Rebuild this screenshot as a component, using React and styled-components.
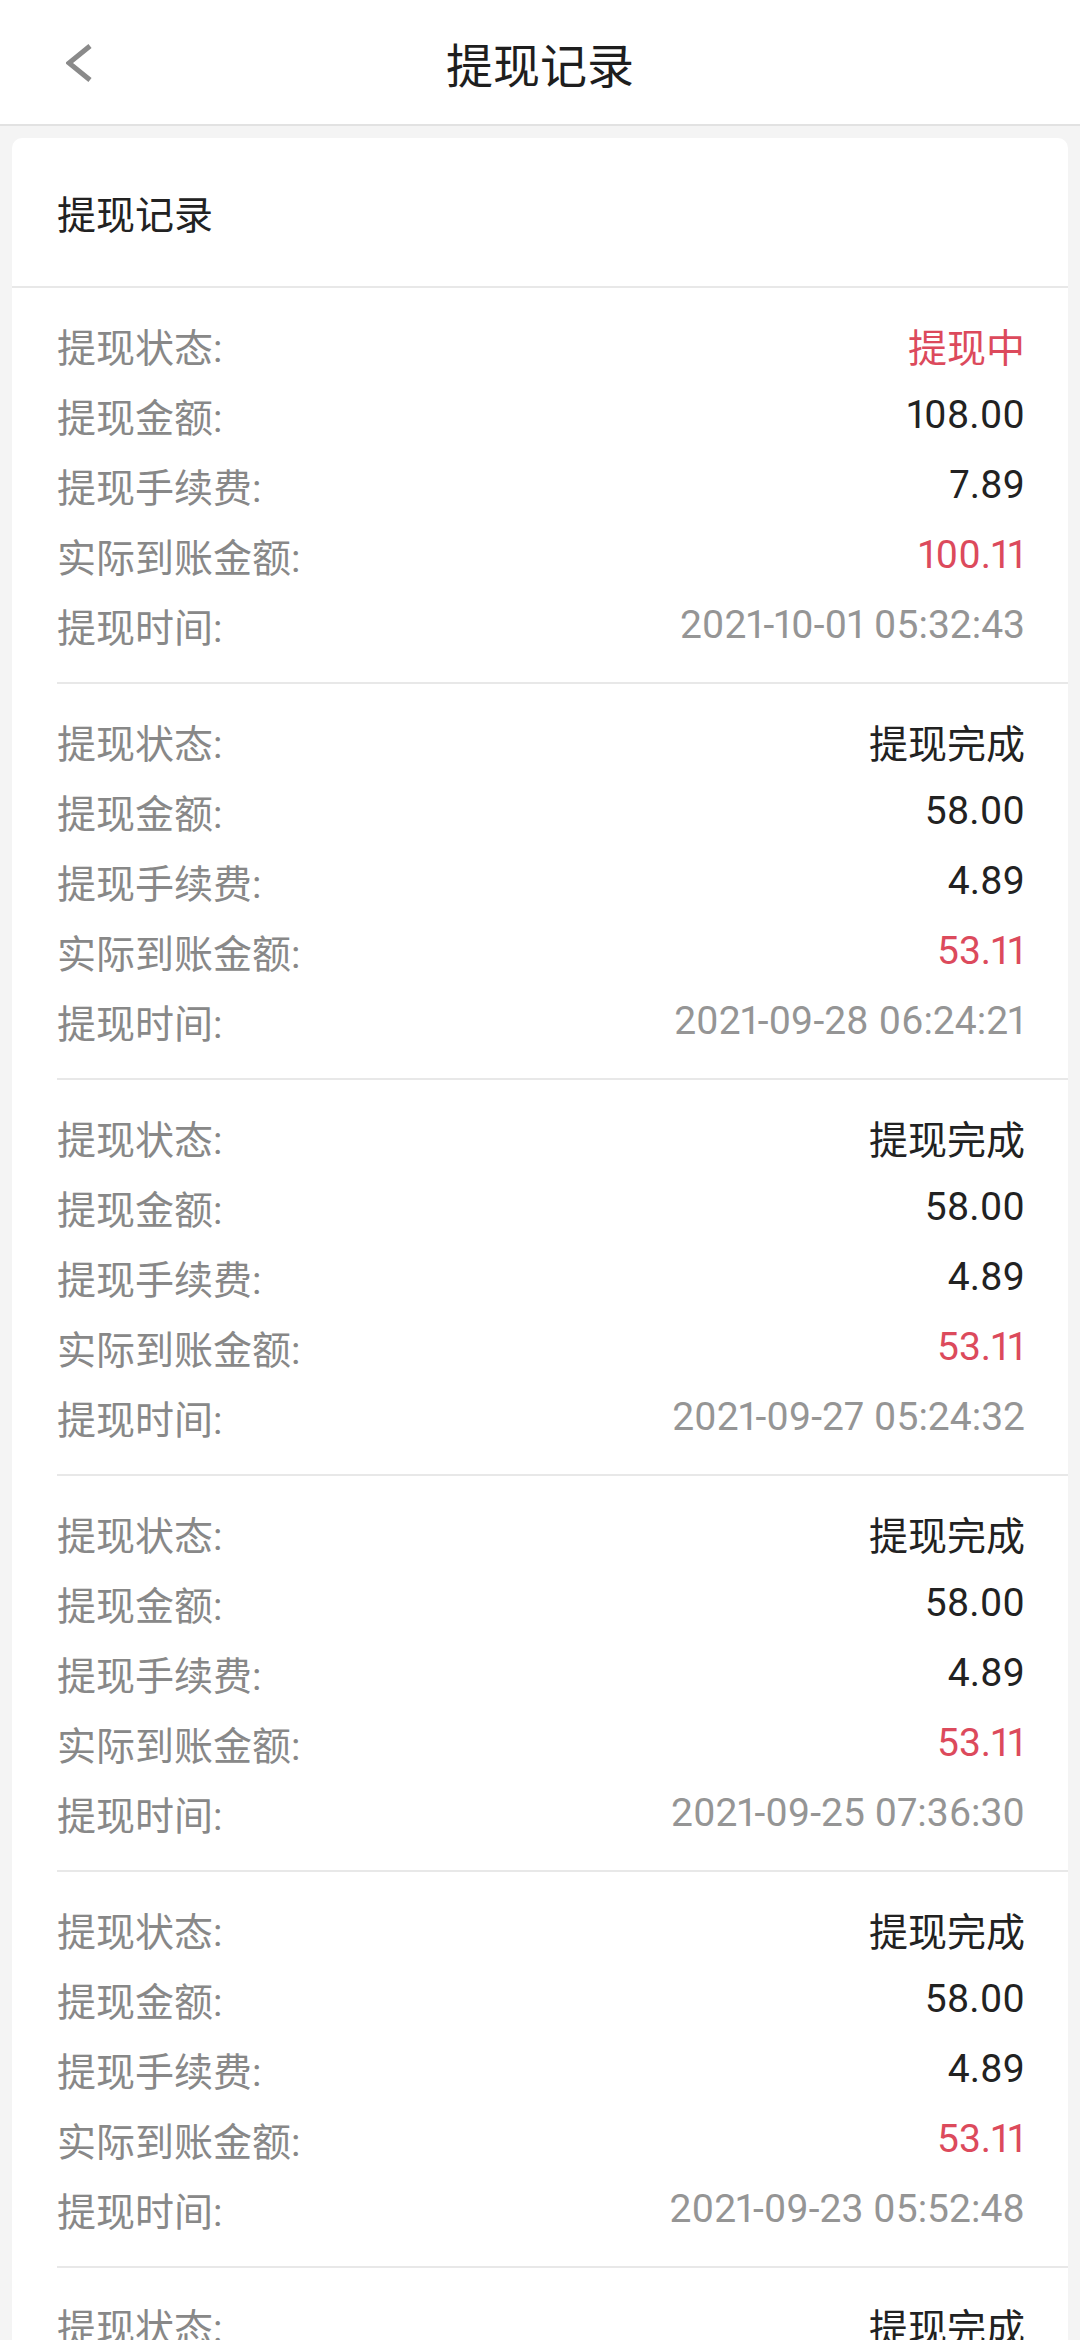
import styled, { createGlobalStyle } from "styled-components";

const GlobalStyle = createGlobalStyle`
  html, body {
    margin: 0;
    padding: 0;
    background: #f4f4f4;
  }
  body {
    font-family: Roboto, "Noto Sans CJK SC", sans-serif;
  }
`;

const records = [
  { status: "提现中", pending: true, amount: "108.00", fee: "7.89", actual: "100.11", time: "2021-10-01 05:32:43" },
  { status: "提现完成", amount: "58.00", fee: "4.89", actual: "53.11", time: "2021-09-28 06:24:21" },
  { status: "提现完成", amount: "58.00", fee: "4.89", actual: "53.11", time: "2021-09-27 05:24:32" },
  { status: "提现完成", amount: "58.00", fee: "4.89", actual: "53.11", time: "2021-09-25 07:36:30" },
  { status: "提现完成", amount: "58.00", fee: "4.89", actual: "53.11", time: "2021-09-23 05:52:48" },
  { status: "提现完成", amount: "58.00", fee: "4.89", actual: "53.11", time: "2021-09-21 06:12:05" },
];

const BackIcon = () => (
  <svg width="30" height="44" viewBox="0 0 30 44">
    <polyline
      points="24,5 3,22 24,39"
      fill="none"
      stroke="#8a8a8a"
      strokeWidth="5"
      strokeLinejoin="miter"
    />
  </svg>
);

const App = () => {
  const RecordList = records.map((r, idx) => (
    <Group key={idx}>
      <Row>
        <Label>提现状态:</Label>
        <Value tone={r.pending ? "red" : "dark"}>{r.status}</Value>
      </Row>
      <Row>
        <Label>提现金额:</Label>
        <Value tone="dark">{r.amount}</Value>
      </Row>
      <Row>
        <Label>提现手续费:</Label>
        <Value tone="dark">{r.fee}</Value>
      </Row>
      <Row>
        <Label>实际到账金额:</Label>
        <Value tone="red">{r.actual}</Value>
      </Row>
      <Row>
        <Label>提现时间:</Label>
        <Value tone="gray">{r.time}</Value>
      </Row>
    </Group>
  ));

  return (
    <Page>
      <GlobalStyle />
      <Header>
        <BackButton>
          <BackIcon />
        </BackButton>
        <HeaderTitle>提现记录</HeaderTitle>
        <div />
      </Header>
      <Card>
        <CardTitle>提现记录</CardTitle>
        {RecordList}
      </Card>
    </Page>
  );
};

const Page = styled.div`
  height: 2340px;
  overflow: hidden;
  background: #f4f4f4;
`;

const Header = styled.div`
  height: 124px;
  background: #ffffff;
  border-bottom: 2px solid #e2e2e2;
  display: grid;
  grid-template-columns: 1fr auto 1fr;
  align-items: center;
`;

const BackButton = styled.div`
  display: flex;
  align-items: center;
  padding-left: 66px;
  padding-top: 2px;
`;

const HeaderTitle = styled.div`
  font-size: 47px;
  color: #1e1e1e;
`;

const Card = styled.div`
  margin: 12px 12px 0;
  background: #ffffff;
  border-radius: 10px;
`;

const CardTitle = styled.div`
  height: 148px;
  display: flex;
  align-items: center;
  padding-left: 45px;
  font-size: 39px;
  color: #222222;
  border-bottom: 2px solid #e8e8e8;
`;

const Group = styled.div`
  margin-left: 45px;
  padding: 22px 43px 22px 0;
  border-bottom: 2px solid #e8e8e8;
`;

const Row = styled.div`
  height: 70px;
  display: flex;
  justify-content: space-between;
  align-items: center;
  font-size: 39px;
`;

const Label = styled.div`
  color: #888888;
`;

const toneColor = {
  red: "#dc4a5c",
  dark: "#222222",
  gray: "#959595",
};

const Value = styled.div`
  color: ${(props) => toneColor[props.tone]};
  font-variant-numeric: proportional-nums;
`;

export default App;
